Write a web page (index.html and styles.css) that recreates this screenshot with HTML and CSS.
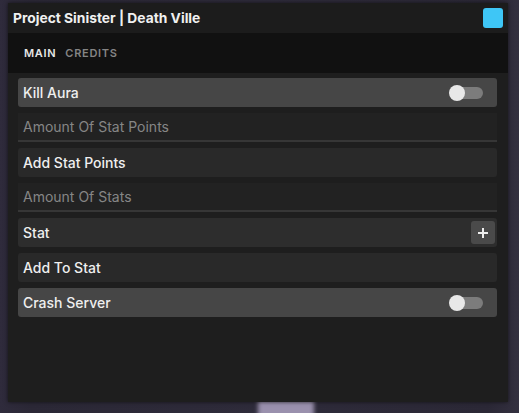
FILE: index.html
```html
<!DOCTYPE html>
<html>
<head>
<meta charset="utf-8">
<link rel="stylesheet" href="styles.css">
</head>
<body>
<div class="bg-blob"></div>
<div class="window">
  <div class="titlebar">
    <span class="title">Project Sinister | Death Ville</span>
    <span class="close"></span>
  </div>
  <div class="tabs">
    <span class="tab active">MAIN</span>
    <span class="tab">CREDITS</span>
  </div>
  <div class="content">
    <div class="row toggle-row">
      <span class="label">Kill Aura</span>
      <span class="toggle"><span class="knob"></span></span>
    </div>
    <div class="row section"><span class="label">Amount Of Stat Points</span></div>
    <div class="row button-row"><span class="label">Add Stat Points</span></div>
    <div class="row section"><span class="label">Amount Of Stats</span></div>
    <div class="row drop-row">
      <span class="label">Stat</span>
      <span class="plus"><svg width="12" height="12" viewBox="0 0 12 12"><path d="M6 1v10M1 6h10" stroke="#eeeeee" stroke-width="2" fill="none"/></svg></span>
    </div>
    <div class="row button-row"><span class="label">Add To Stat</span></div>
    <div class="row toggle-row">
      <span class="label">Crash Server</span>
      <span class="toggle"><span class="knob"></span></span>
    </div>
  </div>
</div>
</body>
</html>
```
FILE: styles.css
```css
html, body {
  margin: 0;
  padding: 0;
  height: 100%;
}
body {
  background: linear-gradient(90deg, #2f2b3c 0%, #2b2836 6%, #2e2b3a 50%, #2b2836 94%, #33303f 100%);
  font-family: "Inter", "Noto Sans", sans-serif;
  overflow: hidden;
  position: relative;
}
.bg-blob {
  position: absolute;
  left: 258px;
  top: 400px;
  width: 56px;
  height: 20px;
  background: #9a90ad;
  filter: blur(2px);
}
.window {
  position: relative;
  margin: 3px 0 0 8px;
  width: 500px;
  height: 399px;
  background: #1e1e1e;
  box-shadow: 0 0 4px rgba(0,0,0,0.6);
}
.titlebar {
  height: 30px;
  background: #1c1c1c;
  display: flex;
  align-items: center;
  justify-content: space-between;
  padding: 0 5px 0 5px;
}
.title {
  color: #f0f0f0;
  font-weight: 700;
  font-size: 13.8px;
}
.close {
  width: 20px;
  height: 20px;
  background: #3ec6f6;
  border-radius: 3px;
}
.tabs {
  height: 40px;
  background: #111111;
  display: flex;
  align-items: center;
  gap: 9px;
  padding-left: 16px;
}
.tab {
  font-size: 11px;
  font-weight: 600;
  letter-spacing: 0.7px;
  color: #858585;
}
.tab.active {
  color: #e6e6e6;
}
.content {
  padding: 5px 11px 0 10px;
  display: flex;
  flex-direction: column;
  gap: 6px;
}
.row {
  height: 29px;
  display: flex;
  align-items: center;
  justify-content: space-between;
  padding: 0 5px;
  border-radius: 3px;
  box-sizing: border-box;
}
.label {
  color: #efefef;
  font-size: 14px;
  font-weight: 500;
}
.toggle-row {
  background: #464646;
}
.button-row {
  background: #292929;
}
.drop-row {
  background: #2d2d2d;
  padding-right: 2px;
}
.section {
  background: #222222;
  border-bottom: 2px solid #363636;
  border-radius: 0;
}
.section .label {
  color: #868686;
  font-weight: 400;
}
.toggle {
  position: relative;
  width: 32px;
  height: 12px;
  background: #7c7c7c;
  border-radius: 6px;
  margin-right: 9px;
}
.knob {
  position: absolute;
  left: -2px;
  top: -2px;
  width: 16px;
  height: 16px;
  border-radius: 50%;
  background: #e8e8e8;
}
.plus {
  width: 24px;
  height: 23px;
  background: #4a4a4a;
  border-radius: 3px;
  display: flex;
  align-items: center;
  justify-content: center;
}
```
